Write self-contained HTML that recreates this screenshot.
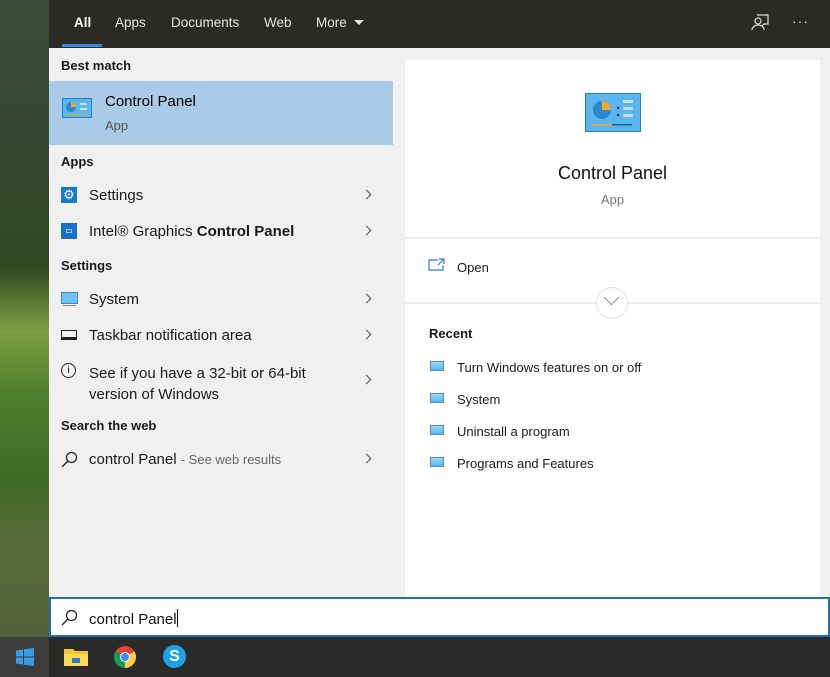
<!DOCTYPE html>
<html><head><meta charset="utf-8"><style>
*{margin:0;padding:0;box-sizing:border-box}
body{width:830px;height:677px;overflow:hidden;position:relative;font-family:"Liberation Sans",sans-serif;color:#000;background:#2c3a22}
.abs{position:absolute}
#bg{left:0;top:0;width:49px;height:637px;background:linear-gradient(180deg,#3a4a38 0%,#34482e 25%,#2d4a22 42%,#7aa040 52%,#4f7e2c 62%,#3f6a25 75%,#566a38 85%,#55603a 100%)}
#top{left:49px;top:0;width:781px;height:48px;background:#2b2a25}
.tab{position:absolute;top:15px;font-size:13.5px;color:#e6e6e6}
#left{left:49px;top:48px;width:344px;height:549px;background:#f0f0f0}
#right{left:393px;top:48px;width:437px;height:549px;background:#f0f0f0}
#card{left:405px;top:60px;width:415px;height:537px;background:#fff}
.h{position:absolute;left:61px;font-size:13px;font-weight:bold;color:#1a1a1a}
.it{position:absolute;left:89px;font-size:15px;color:#1a1a1a}
.chev{position:absolute;left:363px;width:7px;height:7px;border-right:1.5px solid #555;border-top:1.5px solid #555;transform:rotate(45deg)}
.rc{position:absolute;left:457px;font-size:13px;color:#1a1a1a}
.ri{position:absolute;left:430px;width:14px;height:10px;background:linear-gradient(#9fd6f2,#5fb4e4);border:1px solid #4a90c0}
</style></head><body>
<div id="bg" class="abs"></div>
<div id="top" class="abs"></div>
<div class="tab" style="left:74px;font-weight:bold;color:#fff">All</div>
<div class="abs" style="left:62px;top:44px;width:40px;height:3px;background:#2f8fe0"></div>
<div class="tab" style="left:115px">Apps</div>
<div class="tab" style="left:171px">Documents</div>
<div class="tab" style="left:264px">Web</div>
<div class="tab" style="left:316px">More</div>
<div class="abs" style="left:354px;top:20px;width:0;height:0;border-left:5px solid transparent;border-right:5px solid transparent;border-top:5px solid #e6e6e6"></div>
<svg class="abs" style="left:750px;top:12px" width="20" height="20" viewBox="0 0 20 20" fill="none" stroke="#ddd" stroke-width="1.2"><path d="M7 3h11v9h-4l-2 2"/><circle cx="8" cy="9" r="3"/><path d="M2 18c0-3 3-5 6-5s6 2 6 5"/></svg>
<div class="abs" style="left:792px;top:13px;color:#ddd;font-size:14px;letter-spacing:1px">···</div>

<div id="left" class="abs"></div>
<div class="h" style="top:58px">Best match</div>
<div class="abs" style="left:49px;top:81px;width:344px;height:64px;background:#a9cbe8"></div>
<svg class="abs" style="left:62px;top:98px" width="30" height="20" viewBox="0 0 30 20"><rect x="0.5" y="0.5" width="29" height="19" fill="#5ab7ee" stroke="#2a7fc0"/><circle cx="9" cy="9" r="5" fill="#2a8ad0"/><path d="M9 4a5 5 0 0 1 5 5h-5z" fill="#f5a623"/><rect x="18" y="5" width="7" height="2" fill="#cde"/><rect x="18" y="10" width="7" height="2" fill="#cde"/><rect x="4" y="16" width="22" height="1" fill="#f5a623"/></svg>
<div class="abs" style="left:105px;top:93px;font-size:15px;color:#000">Control Panel</div>
<div class="abs" style="left:105px;top:118px;font-size:13px;color:#555">App</div>
<div class="h" style="top:154px">Apps</div>
<div class="abs" style="left:61px;top:187px;width:16px;height:16px;background:#1a78d0;color:#fff;font-size:13px;line-height:16px;text-align:center">⚙</div>
<div class="it" style="top:187px">Settings</div><div class="chev" style="top:191px"></div>
<div class="abs" style="left:61px;top:223px;width:16px;height:16px;background:#1a6fc4"><div class="abs" style="left:5px;top:6px;width:6px;height:4px;border:1px solid #9cc8f0"></div></div>
<div class="it" style="top:223px">Intel® Graphics <b>Control Panel</b></div><div class="chev" style="top:227px"></div>
<div class="h" style="top:258px">Settings</div>
<div class="abs" style="left:61px;top:292px;width:17px;height:12px;background:#6fc1f0;border:1px solid #3a8cc8"></div>
<div class="abs" style="left:63px;top:305px;width:13px;height:1px;background:#888"></div>
<div class="it" style="top:291px">System</div><div class="chev" style="top:295px"></div>
<div class="abs" style="left:61px;top:330px;width:16px;height:10px;border:1.5px solid #222;border-bottom-width:3px"></div>
<div class="it" style="top:327px">Taskbar notification area</div><div class="chev" style="top:331px"></div>
<div class="abs" style="left:61px;top:363px;width:15px;height:15px;border:1.3px solid #222;border-radius:50%;font-size:10px;text-align:center;line-height:13px">i</div>
<div class="it" style="top:363px;line-height:21px">See if you have a 32-bit or 64-bit<br>version of Windows</div><div class="chev" style="top:376px"></div>
<div class="h" style="top:418px">Search the web</div>
<svg class="abs" style="left:61px;top:451px" width="17" height="17" viewBox="0 0 17 17" fill="none" stroke="#222" stroke-width="1.3"><circle cx="10.5" cy="6.5" r="5"/><path d="M7 10l-6 6"/></svg>
<div class="it" style="top:451px">control Panel <span style="font-size:13px;color:#666">- See web results</span></div><div class="chev" style="top:455px"></div>

<div id="right" class="abs"></div>
<div id="card" class="abs"></div>
<svg class="abs" style="left:585px;top:93px" width="56" height="40" viewBox="0 0 56 40"><rect x="0.5" y="0.5" width="55" height="38" fill="#5ab7ee" stroke="#2a7fc0"/><circle cx="17" cy="17" r="9" fill="#2a8ad0"/><path d="M17 8a9 9 0 0 1 9 9h-9z" fill="#f5a623"/><rect x="38" y="7" width="10" height="3" rx="1.5" fill="#cde"/><rect x="38" y="14" width="10" height="3" rx="1.5" fill="#cde"/><rect x="38" y="21" width="10" height="3" rx="1.5" fill="#cde"/><circle cx="33" cy="15" r="1.2" fill="#135"/><circle cx="33" cy="22" r="1.2" fill="#135"/><rect x="7" y="31" width="20" height="1.5" fill="#f5a623"/><rect x="27" y="31" width="20" height="1.5" fill="#1a5fa0"/></svg>
<div class="abs" style="left:405px;top:163px;width:415px;text-align:center;font-size:18px;color:#111">Control Panel</div>
<div class="abs" style="left:405px;top:192px;width:415px;text-align:center;font-size:13px;color:#777">App</div>
<div class="abs" style="left:405px;top:237px;width:415px;height:2px;background:#eee"></div>
<svg class="abs" style="left:428px;top:258px" width="17" height="13" viewBox="0 0 17 13" fill="none" stroke="#2a7fc0" stroke-width="1.2"><path d="M10 2H1v10h14V7"/><path d="M11 1h5v5M16 1l-6 6"/></svg>
<div class="rc" style="top:260px">Open</div>
<div class="abs" style="left:405px;top:302px;width:415px;height:2px;background:#eee"></div>
<div class="abs" style="left:596px;top:287px;width:32px;height:32px;border-radius:50%;background:#fff;border:1px solid #e2e2e2"></div>
<div class="abs" style="left:606px;top:292px;width:11px;height:11px;border-right:1.3px solid #888;border-bottom:1.3px solid #888;transform:rotate(45deg)"></div>
<div class="abs" style="left:429px;top:326px;font-size:13px;font-weight:bold;color:#1a1a1a">Recent</div>
<div class="ri" style="top:361px"></div><div class="rc" style="top:360px">Turn Windows features on or off</div>
<div class="ri" style="top:393px"></div><div class="rc" style="top:392px">System</div>
<div class="ri" style="top:425px"></div><div class="rc" style="top:424px">Uninstall a program</div>
<div class="ri" style="top:457px"></div><div class="rc" style="top:456px">Programs and Features</div>

<div class="abs" style="left:49px;top:597px;width:781px;height:40px;background:#fff;border:2px solid #1e6fb8"></div>
<svg class="abs" style="left:61px;top:609px" width="17" height="17" viewBox="0 0 17 17" fill="none" stroke="#222" stroke-width="1.3"><circle cx="10.5" cy="6.5" r="5"/><path d="M7 10l-6 6"/></svg>
<div class="abs" style="left:89px;top:609px;font-size:15px;color:#111">control Panel<span style="display:inline-block;width:1px;height:18px;background:#000;vertical-align:-3px"></span></div>

<div class="abs" style="left:0;top:637px;width:830px;height:40px;background:#2a2a28"></div>
<div class="abs" style="left:0;top:637px;width:49px;height:40px;background:#3c3c3a"></div>
<svg class="abs" style="left:16px;top:648px" width="18" height="18" viewBox="0 0 18 18" fill="#3a9be6"><path d="M0 2.5l7-1v7H0zM8 1.3L18 0v8.5H8zM0 9.5h7v7l-7-1zM8 9.5h10V18L8 16.7z"/></svg>
<svg class="abs" style="left:64px;top:647px" width="24" height="20" viewBox="0 0 24 20"><path d="M0 2h9l2 2h13v15H0z" fill="#f4c430"/><rect x="0" y="7" width="24" height="12" fill="#ffd95a"/><rect x="8" y="11" width="8" height="5" fill="#2a7fc0"/></svg>
<svg class="abs" style="left:113px;top:645px" width="24" height="24" viewBox="0 0 24 24"><circle cx="12" cy="12" r="11" fill="#db4437"/><path d="M12 12L2.5 6.5A11 11 0 0 0 12 23z" fill="#0f9d58"/><path d="M12 12L12 23A11 11 0 0 0 21.5 6.5z" fill="#ffcd40"/><circle cx="12" cy="12" r="5" fill="#fff"/><circle cx="12" cy="12" r="4" fill="#4285f4"/></svg>
<div class="abs" style="left:163px;top:645px;width:23px;height:23px;border-radius:50%;background:#1da1e8;color:#fff;font-weight:bold;font-size:16px;text-align:center;line-height:23px">S</div>
</body></html>
